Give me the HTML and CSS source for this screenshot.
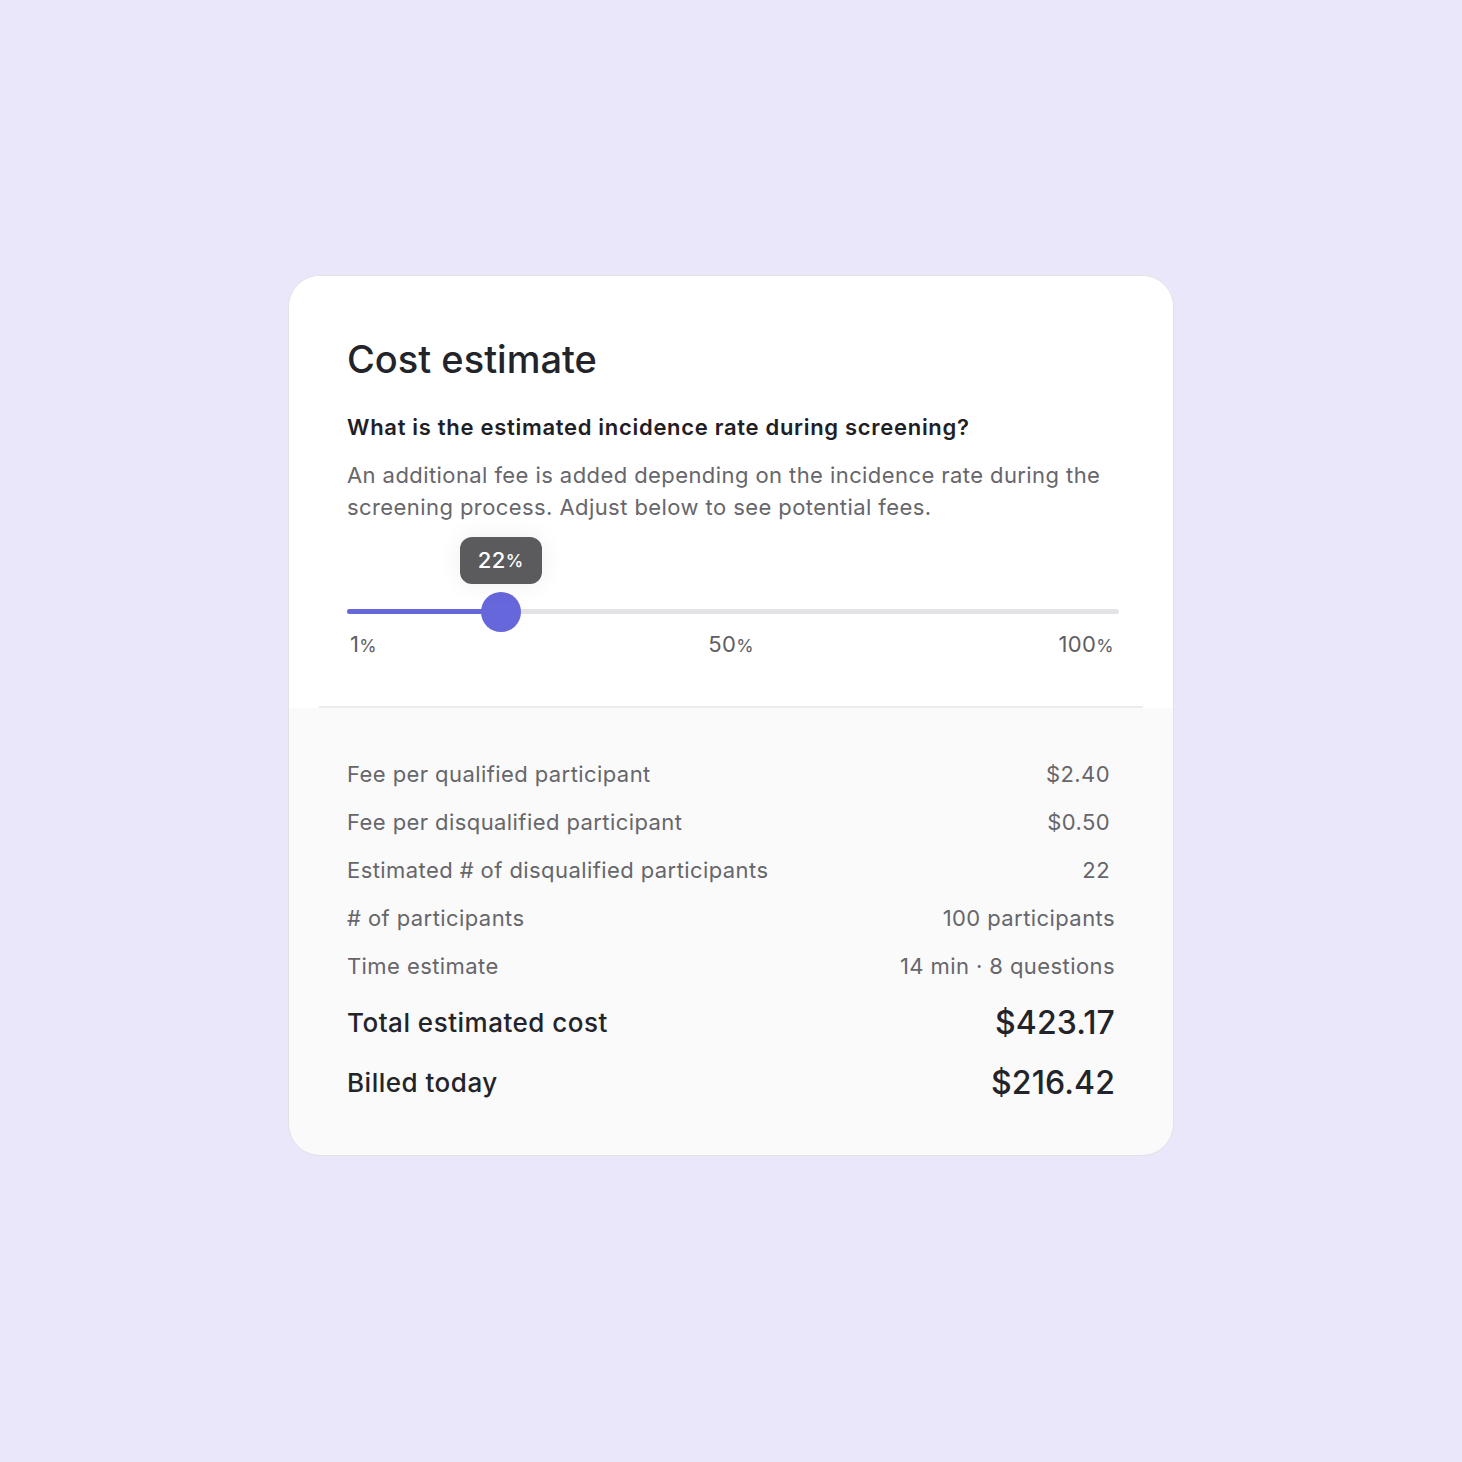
FILE: index.html
```html
<!DOCTYPE html>
<html lang="en">
<head>
<meta charset="utf-8">
<title>Cost estimate</title>
<link rel="stylesheet" href="styles.css">
</head>
<body>
<main class="page">
  <section class="card">
    <div class="card-top">
      <h1 class="title">Cost estimate</h1>
      <h2 class="question">What is the estimated incidence rate during screening?</h2>
      <p class="desc">An additional fee is added depending on the incidence rate during the screening process. Adjust below to see potential fees.</p>
      <div class="slider">
        <div class="track">
          <div class="fill" style="width: 19.9%"></div>
          <div class="thumb" style="left: 19.9%">
            <div class="tooltip">22<span class="pct">%</span></div>
          </div>
        </div>
        <div class="scale">
          <span class="tick tick-start">1<span class="pct">%</span></span>
          <span class="tick tick-mid">50<span class="pct">%</span></span>
          <span class="tick tick-end">100<span class="pct">%</span></span>
        </div>
      </div>
      <hr class="divider">
    </div>
    <div class="card-bottom">
      <div class="row"><span>Fee per qualified participant</span><span class="val inset">$2.40</span></div>
      <div class="row"><span>Fee per disqualified participant</span><span class="val inset">$0.50</span></div>
      <div class="row"><span>Estimated # of disqualified participants</span><span class="val inset">22</span></div>
      <div class="row"><span># of participants</span><span class="val">100 participants</span></div>
      <div class="row"><span>Time estimate</span><span class="val">14 min · 8 questions</span></div>
      <div class="totals">
        <div class="row total"><span>Total estimated cost</span><span class="amount">$423.17</span></div>
        <div class="row total"><span>Billed today</span><span class="amount">$216.42</span></div>
      </div>
    </div>
  </section>
</main>
</body>
</html>
```

FILE: styles.css
```css
* { box-sizing: border-box; }

html, body {
  margin: 0;
  padding: 0;
  background: #e9e7f9;
  font-family: Inter, "Noto Sans", "Liberation Sans", sans-serif;
}

.page {
  min-height: 1462px;
  display: flex;
  justify-content: center;
  align-items: flex-start;
  padding-top: 275px;
}

.card {
  width: 886px;
  background: #fafafa;
  border: 1.5px solid #e2e2e6;
  border-radius: 32px;
  overflow: hidden;
}

.card-top {
  background: #ffffff;
  padding: 60px 58px 0 58px;
}

.title {
  margin: 0;
  font-size: 38px;
  line-height: 46px;
  font-weight: 500;
  color: #23242a;
  letter-spacing: 0;
}

.question {
  margin: 31px 0 0 0;
  font-size: 22px;
  line-height: 28px;
  font-weight: 600;
  color: #1f2026;
  letter-spacing: 0.7px;
}

.desc {
  margin: 18px 0 0 0;
  font-size: 22px;
  line-height: 32px;
  font-weight: 400;
  color: #66666b;
  letter-spacing: 0.42px;
}

.slider {
  margin-top: 86px;
}

.track {
  position: relative;
  height: 5px;
  margin-right: -4px;
  background: #e3e3e6;
  border-radius: 3px;
}

.fill {
  height: 100%;
  background: #6767dc;
  border-radius: 3px;
}

.thumb {
  position: absolute;
  top: 50%;
  width: 40px;
  height: 40px;
  margin: -20px 0 0 -20px;
  border-radius: 50%;
  background: #6767dc;
}

.tooltip {
  position: absolute;
  bottom: 48px;
  left: 50%;
  transform: translateX(-50%);
  width: 82px;
  height: 47px;
  border-radius: 12px;
  background: #5b5b5e;
  color: #ffffff;
  font-size: 22px;
  font-weight: 500;
  letter-spacing: 0.4px;
  display: flex;
  align-items: center;
  justify-content: center;
  box-shadow: 0 0 24px rgba(0, 0, 0, 0.07);
}

.pct { font-size: 0.8em; }

.scale {
  display: flex;
  justify-content: space-between;
  margin-top: 16px;
  font-size: 22px;
  line-height: 28px;
  color: #5e5e63;
  letter-spacing: 0.4px;
}

.tick-start { padding-left: 3px; width: 100px; }
.tick-mid { text-align: center; }
.tick-end { width: 100px; text-align: right; padding-right: 1px; }

.divider {
  margin: 46px -28px 0 -28px;
  border: 0;
  border-top: 2px solid #ececee;
}

.card-bottom {
  padding: 42px 58px 43px 58px;
  display: flex;
  flex-direction: column;
}

.row {
  display: flex;
  justify-content: space-between;
  align-items: center;
  height: 48px;
  font-size: 22px;
  color: #66666b;
  letter-spacing: 0.42px;
}

.inset { padding-right: 5px; }

.totals {
  margin-top: 2px;
}

.row.total {
  height: 60px;
  color: #23242a;
  font-size: 26px;
  font-weight: 500;
  letter-spacing: 0.5px;
}

.amount {
  font-size: 32px;
  font-weight: 500;
  letter-spacing: 0.1px;
}
```
